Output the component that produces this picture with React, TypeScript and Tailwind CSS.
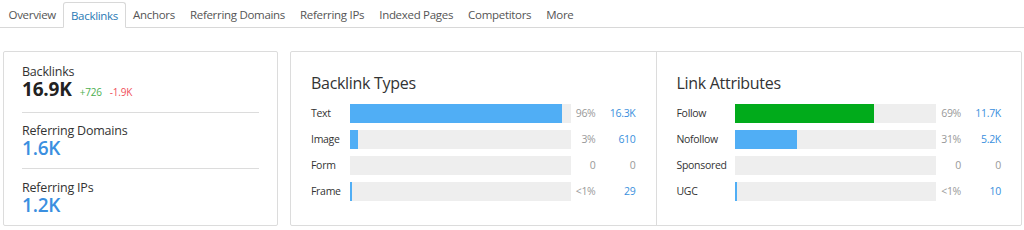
import type { ReactNode } from 'react'

const TABS = [
  'Overview',
  'Backlinks',
  'Anchors',
  'Referring Domains',
  'Referring IPs',
  'Indexed Pages',
  'Competitors',
  'More',
]

type Row = { label: string; pct: number; pctText: string; count: string; color?: string }

const BACKLINK_TYPES: Row[] = [
  { label: 'Text', pct: 96, pctText: '96%', count: '16.3K' },
  { label: 'Image', pct: 3.5, pctText: '3%', count: '610' },
  { label: 'Form', pct: 0, pctText: '0', count: '0' },
  { label: 'Frame', pct: 1, pctText: '<1%', count: '29' },
]

const LINK_ATTRIBUTES: Row[] = [
  { label: 'Follow', pct: 69, pctText: '69%', count: '11.7K', color: '#01ab1b' },
  { label: 'Nofollow', pct: 31, pctText: '31%', count: '5.2K' },
  { label: 'Sponsored', pct: 0, pctText: '0', count: '0' },
  { label: 'UGC', pct: 1, pctText: '<1%', count: '10' },
]

function Stat({ label, children }: { label: string; children: ReactNode }) {
  return (
    <div className="flex flex-col">
      <span className="text-[12.5px] leading-[15px] tracking-[-0.2px] text-[#333]">{label}</span>
      {children}
    </div>
  )
}

function BarSection({
  title,
  rows,
  labelWidth,
  divider,
}: {
  title: string
  rows: Row[]
  labelWidth: string
  divider?: boolean
}) {
  return (
    <section className={`flex-1 px-5 pt-[21px] ${divider ? 'border-l border-[#dcdcdc]' : ''}`}>
      <h2 className="text-[16px] leading-[20px] font-medium tracking-[-0.3px] text-[#333]">{title}</h2>
      <div className="mt-[11px] flex flex-col gap-[7px]">
        {rows.map((r) => (
          <div key={r.label} className="flex items-center text-[10.5px] leading-[19px] tracking-[-0.3px]">
            <span className={`${labelWidth} shrink-0 text-[#333]`}>{r.label}</span>
            <div className="h-[19px] flex-1 bg-[#eeeeee]">
              {r.pct > 0 && (
                <div
                  className="h-full"
                  style={{
                    width: r.pct === 1 ? '2px' : `${r.pct}%`,
                    background: r.color ?? '#50aef5',
                  }}
                />
              )}
            </div>
            <span className="w-[25px] shrink-0 text-right text-[#999]">{r.pctText}</span>
            <span
              className={`w-[40px] shrink-0 text-right ${r.count === '0' ? 'text-[#999]' : 'text-[#3a8fdd]'}`}
            >
              {r.count}
            </span>
          </div>
        ))}
      </div>
    </section>
  )
}

export default function App() {
  return (
    <div
      className="h-[230px] w-[1024px] overflow-hidden bg-white"
      style={{ fontFamily: '"Open Sans", "Liberation Sans", sans-serif' }}
    >
      <nav className="flex h-[28px] items-end border-b border-[#d8d8d8] pl-[1px]">
        {TABS.map((t) => (
          <div
            key={t}
            className={
              t === 'Backlinks'
                ? '-mb-px h-[26px] rounded-t-[3px] border border-b-white border-[#d8d8d8] bg-white px-[6.5px] text-[11.5px] leading-[26px] tracking-[-0.3px] text-[#2a7ab5]'
                : 'h-[26px] border border-transparent px-[6.5px] text-[11.5px] leading-[26px] tracking-[-0.3px] text-[#555]'
            }
          >
            {t}
          </div>
        ))}
      </nav>

      <div className="flex gap-[12px] pt-[23px] pl-[3px] pr-[2px]">
        <div className="flex h-[175px] w-[275px] shrink-0 flex-col rounded-[2px] border border-[#dcdcdc] px-[18px] pt-[12px]">
          <Stat label="Backlinks">
            <div className="flex items-baseline gap-[8px]">
              <span className="text-[19px] leading-[20px] font-bold tracking-[-0.2px] text-[#222]">16.9K</span>
              <span className="text-[10px] leading-[20px] tracking-[-0.2px] text-[#4caf50]">+726</span>
              <span className="text-[10px] leading-[20px] tracking-[-0.2px] text-[#f0505a]">-1.9K</span>
            </div>
          </Stat>
          <div className="mt-[10px] mb-[10px] h-px bg-[#dcdcdc]" />
          <Stat label="Referring Domains">
            <span className="text-[19px] leading-[20px] font-semibold tracking-[-0.2px] text-[#3b8fe0]">1.6K</span>
          </Stat>
          <div className="mt-[10px] mb-[11px] h-px bg-[#dcdcdc]" />
          <Stat label="Referring IPs">
            <span className="text-[19px] leading-[20px] font-semibold tracking-[-0.2px] text-[#3b8fe0]">1.2K</span>
          </Stat>
        </div>

        <div className="flex h-[175px] flex-1 rounded-[2px] border border-[#dcdcdc]">
          <BarSection title="Backlink Types" rows={BACKLINK_TYPES} labelWidth="w-[39px]" />
          <BarSection title="Link Attributes" rows={LINK_ATTRIBUTES} labelWidth="w-[58px]" divider />
        </div>
      </div>
    </div>
  )
}
